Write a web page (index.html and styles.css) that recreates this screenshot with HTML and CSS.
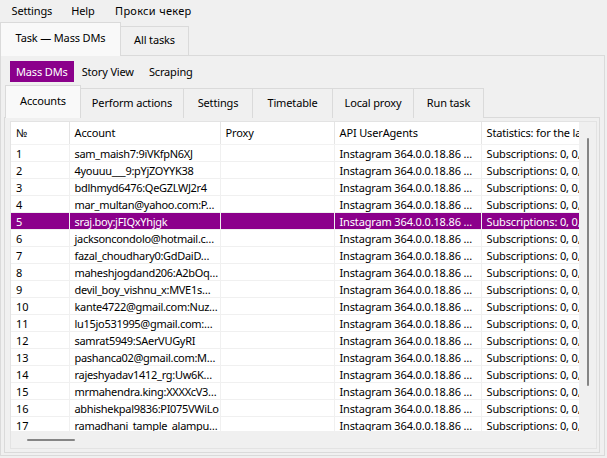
FILE: index.html
```html
<!DOCTYPE html>
<html>
<head>
<meta charset="utf-8">
<link rel="stylesheet" href="styles.css">
</head>
<body>
<div class="menubar">
  <span class="menu-item">Settings</span>
  <span class="menu-item">Help</span>
  <span class="menu-item">Прокси чекер</span>
</div>
<div class="tabbar tabbar-outer">
  <div class="tab tab-active tab-task">Task — Mass DMs</div>
  <div class="tab tab-alltasks">All tasks</div>
</div>
<div class="pane pane-outer">
  <div class="toolbar">
    <span class="tool tool-active">Mass DMs</span>
    <span class="tool">Story View</span>
    <span class="tool">Scraping</span>
  </div>
  <div class="tabbar tabbar-inner">
    <div class="tab tab-active w-accounts">Accounts</div>
    <div class="tab w-perform">Perform actions</div>
    <div class="tab w-settings">Settings</div>
    <div class="tab w-timetable">Timetable</div>
    <div class="tab w-proxy">Local proxy</div>
    <div class="tab w-run">Run task</div>
  </div>
  <div class="pane pane-inner">
    <div class="frame">
      <div class="viewport">
        <table class="grid">
          <colgroup>
            <col class="c-num"><col class="c-acc"><col class="c-proxy"><col class="c-api"><col class="c-stats">
          </colgroup>
          <thead>
            <tr><th>№</th><th>Account</th><th>Proxy</th><th>API UserAgents</th><th>Statistics: for the last 24 hours</th></tr>
          </thead>
          <tbody>
            <tr><td>1</td><td>sam_maish7:9iVKfpN6XJ</td><td></td><td>Instagram 364.0.0.18.86 …</td><td>Subscriptions: 0, 0, 0</td></tr>
            <tr><td>2</td><td>4youuu___9:pYjZOYYK38</td><td></td><td>Instagram 364.0.0.18.86 …</td><td>Subscriptions: 0, 0, 0</td></tr>
            <tr><td>3</td><td>bdlhmyd6476:QeGZLWJ2r4</td><td></td><td>Instagram 364.0.0.18.86 …</td><td>Subscriptions: 0, 0, 0</td></tr>
            <tr><td>4</td><td>mar_multan@yahoo.com:P…</td><td></td><td>Instagram 364.0.0.18.86 …</td><td>Subscriptions: 0, 0, 0</td></tr>
            <tr class="selected"><td>5</td><td>sraj.boy:jFIQxYhjgk</td><td></td><td>Instagram 364.0.0.18.86 …</td><td>Subscriptions: 0, 0, 0</td></tr>
            <tr><td>6</td><td>jacksoncondolo@hotmail.c…</td><td></td><td>Instagram 364.0.0.18.86 …</td><td>Subscriptions: 0, 0, 0</td></tr>
            <tr><td>7</td><td>fazal_choudhary0:GdDaiD…</td><td></td><td>Instagram 364.0.0.18.86 …</td><td>Subscriptions: 0, 0, 0</td></tr>
            <tr><td>8</td><td>maheshjogdand206:A2bOq…</td><td></td><td>Instagram 364.0.0.18.86 …</td><td>Subscriptions: 0, 0, 0</td></tr>
            <tr><td>9</td><td>devil_boy_vishnu_x:MVE1s…</td><td></td><td>Instagram 364.0.0.18.86 …</td><td>Subscriptions: 0, 0, 0</td></tr>
            <tr><td>10</td><td>kante4722@gmail.com:Nuz…</td><td></td><td>Instagram 364.0.0.18.86 …</td><td>Subscriptions: 0, 0, 0</td></tr>
            <tr><td>11</td><td>lu15jo531995@gmail.com:…</td><td></td><td>Instagram 364.0.0.18.86 …</td><td>Subscriptions: 0, 0, 0</td></tr>
            <tr><td>12</td><td>samrat5949:SAerVUGyRI</td><td></td><td>Instagram 364.0.0.18.86 …</td><td>Subscriptions: 0, 0, 0</td></tr>
            <tr><td>13</td><td>pashanca02@gmail.com:M…</td><td></td><td>Instagram 364.0.0.18.86 …</td><td>Subscriptions: 0, 0, 0</td></tr>
            <tr><td>14</td><td>rajeshyadav1412_rg:Uw6K…</td><td></td><td>Instagram 364.0.0.18.86 …</td><td>Subscriptions: 0, 0, 0</td></tr>
            <tr><td>15</td><td>mrmahendra.king:XXXXcV3…</td><td></td><td>Instagram 364.0.0.18.86 …</td><td>Subscriptions: 0, 0, 0</td></tr>
            <tr><td>16</td><td>abhishekpal9836:PI075VWiLo</td><td></td><td>Instagram 364.0.0.18.86 …</td><td>Subscriptions: 0, 0, 0</td></tr>
            <tr><td>17</td><td>ramadhani_tample_alampu…</td><td></td><td>Instagram 364.0.0.18.86 …</td><td>Subscriptions: 0, 0, 0</td></tr>
          </tbody>
        </table>
      </div>
      <div class="vscroll"><div class="vthumb"></div></div>
      <div class="hscroll"><div class="hthumb"></div></div>
      <div class="corner"></div>
    </div>
  </div>
</div>
</body>
</html>
```
FILE: styles.css
```css
* { box-sizing: border-box; }
html, body { margin: 0; padding: 0; }
body {
  width: 607px;
  height: 458px;
  overflow: hidden;
  background: #f0f0f0;
  color: #000;
  font-family: "Noto Sans", "Open Sans", sans-serif;
  font-size: 11px;
  letter-spacing: -0.15px;
  display: flex;
  flex-direction: column;
}
.menubar {
  display: flex;
  align-items: center;
  flex-shrink: 0;
  height: 20px;
  padding: 0 0 0 2px;
}
.menu-item { padding: 0 9.5px; }
.menu-item:last-child { letter-spacing: 0.3px; padding-left: 11px; }

.tabbar {
  display: flex;
  align-items: flex-end;
  flex-shrink: 0;
  position: relative;
  z-index: 1;
  margin-bottom: -1px;
}
.tabbar-outer { height: 36px; }
.tab {
  display: flex;
  align-items: center;
  justify-content: center;
  height: 30px;
  border: 1px solid #dadada;
  border-bottom: none;
  border-left: none;
  background: #f0f0f0;
  white-space: nowrap;
}
.tab-active {
  height: 34px;
  background: #f9f9f9;
  border-left: 1px solid #dadada;
}
.tab-task { width: 121px; padding-bottom: 4px; }
.tab-alltasks { width: 68px; margin-bottom: 1px; height: 29px; padding-bottom: 4px; }

.pane {
  border: 1px solid #dadada;
  background: #f0f0f0;
}
.pane-outer {
  flex: 1;
  min-height: 0;
  margin-right: 2px;
  margin-bottom: 2px;
  display: flex;
  flex-direction: column;
  padding: 0 4px 2px 3px;
}
.toolbar {
  display: flex;
  flex-shrink: 0;
  gap: 1px;
  padding: 5px 0 0 6px;
  height: 29px;
}
.tool {
  display: flex;
  align-items: center;
  height: 21px;
  padding: 0 7px;
}
.tool-active { background: #8b008b; color: #fff; padding: 0 6px; }

.tabbar-inner { height: 33px; }
.tabbar-inner .tab { height: 30px; padding-bottom: 2px; }
.tabbar-inner .tab-active { height: 33px; margin-left: 1px; padding-bottom: 4px; }
.w-accounts { width: 76px; }
.w-perform { width: 103px; }
.w-settings { width: 69px; }
.w-timetable { width: 80px; }
.w-proxy { width: 81px; }
.w-run { width: 70px; }

.pane-inner {
  flex: 1;
  min-height: 0;
  padding: 3px 2px 3px 5px;
  display: flex;
}
.frame {
  flex: 1;
  display: grid;
  grid-template-columns: 1fr 17px;
  grid-template-rows: 1fr 17px;
  border: 1px solid #e3e3e3;
  background: #f0f0f0;
  min-height: 0;
  min-width: 0;
}
.viewport {
  overflow: hidden;
  background: #fff;
  min-width: 0;
  min-height: 0;
}
.grid {
  border-collapse: collapse;
  table-layout: fixed;
  width: 620px;
}
.c-num { width: 58px; }
.c-acc { width: 151px; }
.c-proxy { width: 114px; }
.c-api { width: 147px; }
.c-stats { width: 150px; }
.grid th, .grid td {
  padding: 0 0 0 5px;
  white-space: nowrap;
  overflow: hidden;
  text-align: left;
  font-weight: normal;
}
.grid th {
  height: 22px;
  line-height: 20px;
  padding-top: 1px;
  border-right: 1px solid #e5e5e5;
  border-bottom: 1px solid #f2f2f2;
}
.grid td {
  height: 17px;
  line-height: 14px;
  padding-top: 2px;
  border-right: 1px solid #f0f0f0;
  border-bottom: 1px solid #f0f0f0;
}
.grid td:nth-child(2) { letter-spacing: -0.3px; }
.grid tr.selected td {
  background: #8b008b;
  color: #fff;
  border-right-color: #f0f0f0;
}
.vscroll {
  background: #f0f0f0;
  display: flex;
  justify-content: center;
  padding-top: 16px;
}
.vthumb {
  width: 2px;
  height: 248px;
  background: #858585;
  border-radius: 1px;
}
.hscroll {
  display: flex;
  align-items: center;
  padding-left: 16px;
  background: #f0f0f0;
}
.hthumb {
  width: 48px;
  height: 2px;
  background: #858585;
  border-radius: 1px;
}
.corner { background: #f0f0f0; }
```
